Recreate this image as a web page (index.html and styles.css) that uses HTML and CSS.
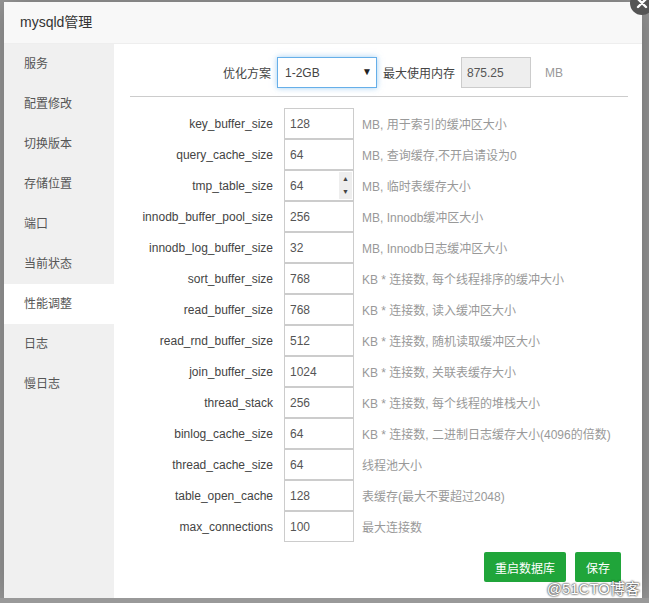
FILE: index.html
```html
<!DOCTYPE html>
<html lang="zh-CN">
<head>
    <meta charset="UTF-8">
    <meta name="viewport" content="width=device-width, initial-scale=1.0">
    <title>mysqld管理</title>
    <link rel="stylesheet" href="styles.css">
</head>
<body>
    <div class="dialog">
        <div class="dialog-title">mysqld管理</div>
        <span class="close-btn">
            <svg width="24" height="24" viewBox="0 0 24 24"><path d="M8 8 L16 16 M16 8 L8 16" stroke="#fff" stroke-width="2.4" stroke-linecap="round"/></svg>
        </span>

        <div class="dialog-body">
            <ul class="side-menu">
                <li>服务</li>
                <li>配置修改</li>
                <li>切换版本</li>
                <li>存储位置</li>
                <li>端口</li>
                <li>当前状态</li>
                <li class="active">性能调整</li>
                <li>日志</li>
                <li>慢日志</li>
            </ul>

            <div class="content">
                <div class="plan-row">
                    <span class="plan-label">优化方案</span>
                    <div class="select-box">
                        <select>
                            <option>1-2GB</option>
                            <option>2-4GB</option>
                            <option>4-8GB</option>
                        </select>
                        <span class="select-arrow">&#9660;</span>
                    </div>
                    <span class="mem-label">最大使用内存</span>
                    <input class="mem-input" type="text" value="875.25" readonly>
                    <span class="mem-unit">MB</span>
                </div>

                <div class="divider"></div>

                <div class="param-list" id="param-list"></div>

                <div class="actions">
                    <button class="btn">重启数据库</button>
                    <button class="btn">保存</button>
                </div>
            </div>
        </div>
        <span class="watermark">@51CTO博客</span>
    </div>

    <script>
        // 参数列表
        const params = [
            { name: "key_buffer_size", value: 128, note: "MB, 用于索引的缓冲区大小" },
            { name: "query_cache_size", value: 64, note: "MB, 查询缓存,不开启请设为0" },
            { name: "tmp_table_size", value: 64, note: "MB, 临时表缓存大小", spin: true },
            { name: "innodb_buffer_pool_size", value: 256, note: "MB, Innodb缓冲区大小" },
            { name: "innodb_log_buffer_size", value: 32, note: "MB, Innodb日志缓冲区大小" },
            { name: "sort_buffer_size", value: 768, note: "KB * 连接数, 每个线程排序的缓冲大小" },
            { name: "read_buffer_size", value: 768, note: "KB * 连接数, 读入缓冲区大小" },
            { name: "read_rnd_buffer_size", value: 512, note: "KB * 连接数, 随机读取缓冲区大小" },
            { name: "join_buffer_size", value: 1024, note: "KB * 连接数, 关联表缓存大小" },
            { name: "thread_stack", value: 256, note: "KB * 连接数, 每个线程的堆栈大小" },
            { name: "binlog_cache_size", value: 64, note: "KB * 连接数, 二进制日志缓存大小(4096的倍数)" },
            { name: "thread_cache_size", value: 64, note: "线程池大小" },
            { name: "table_open_cache", value: 128, note: "表缓存(最大不要超过2048)" },
            { name: "max_connections", value: 100, note: "最大连接数" }
        ];

        const list = document.getElementById("param-list");
        params.forEach(p => {
            const row = document.createElement("div");
            row.className = "param-row";
            row.innerHTML = `
                <span class="param-name">${p.name}</span>
                <span class="param-field">
                    <input type="text" value="${p.value}">
                    ${p.spin ? '<span class="spin"><i>&#9650;</i><i>&#9660;</i></span>' : ''}
                </span>
                <span class="param-note">${p.note}</span>
            `;
            list.appendChild(row);
        });
    </script>
</body>
</html>
```

FILE: styles.css
```css
body {
    margin: 0;
    background-color: #999;
    font-family: "Liberation Sans", "Noto Sans CJK SC", sans-serif;
    font-size: 12px;
    color: #555;
    overflow: hidden;
}
.dialog {
    position: relative;
    margin: 2px 0 0 4px;
    width: 638px;
    height: 596px;
    background-color: #fff;
    box-shadow: 1px 1px 30px rgba(0, 0, 0, 0.3);
}
.dialog-title {
    height: 41px;
    line-height: 41px;
    padding-left: 16px;
    background-color: #f8f8f8;
    border-bottom: 1px solid #eee;
    font-size: 14px;
    color: #333;
}
.close-btn {
    position: absolute;
    top: -11px;
    right: -12px;
    width: 24px;
    height: 24px;
    border-radius: 50%;
    background-color: #555;
}
.close-btn svg {
    display: block;
}
.dialog-body {
    display: flex;
    height: 554px;
}
.side-menu {
    list-style: none;
    margin: 0;
    padding: 0;
    width: 110px;
    background-color: #f0f0f0;
}
.side-menu li {
    height: 40px;
    line-height: 40px;
    padding-left: 20px;
    color: #555;
}
.side-menu li.active {
    background-color: #fff;
}
.content {
    flex: 1;
    padding: 13px 14px 0 16px;
}
.plan-row {
    display: flex;
    align-items: center;
    height: 31px;
}
.plan-label {
    width: 141px;
    text-align: right;
    color: #444;
}
.select-box {
    position: relative;
    margin-left: 6px;
}
.select-box select {
    appearance: none;
    width: 100px;
    height: 31px;
    padding: 0 0 0 7px;
    border: 1px solid #66afe9;
    border-radius: 0;
    box-shadow: 0 0 6px rgba(102, 175, 233, 0.6);
    background-color: #fff;
    font-family: inherit;
    font-size: 12px;
    color: #444;
    outline: none;
}
.select-arrow {
    position: absolute;
    right: 5px;
    top: 9px;
    font-size: 10px;
    color: #222;
}
.mem-label {
    margin-left: 6px;
    color: #444;
}
.mem-input {
    margin-left: 6px;
    width: 70px;
    height: 31px;
    box-sizing: border-box;
    padding: 0 5px;
    border: 1px solid #ccc;
    background-color: #eee;
    font-family: inherit;
    font-size: 12px;
    color: #555;
}
.mem-unit {
    margin-left: 14px;
    color: #999;
}
.divider {
    margin: 8px 0 11px;
    border-top: 1px solid #ccc;
}
.param-row {
    display: flex;
    align-items: center;
    height: 31px;
}
.param-name {
    width: 143px;
    text-align: right;
    color: #444;
}
.param-field {
    position: relative;
    margin-left: 11px;
}
.param-field input {
    display: block;
    width: 70px;
    height: 31px;
    box-sizing: border-box;
    padding: 0 5px;
    border: 1px solid #ccc;
    font-family: inherit;
    font-size: 12px;
    color: #555;
    outline: none;
}
.spin {
    position: absolute;
    top: 2px;
    right: 2px;
    width: 13px;
    height: 27px;
    background-color: #eee;
    display: flex;
    flex-direction: column;
    justify-content: space-around;
    align-items: center;
}
.spin i {
    font-style: normal;
    font-size: 7px;
    line-height: 8px;
    color: #444;
}
.param-note {
    margin-left: 8px;
    color: #999;
}
.actions {
    display: flex;
    justify-content: flex-end;
    gap: 9px;
    margin-top: 10px;
    padding-right: 7px;
}
.btn {
    height: 30px;
    padding: 0 11px;
    border: none;
    border-radius: 2px;
    background-color: #20a53a;
    color: #fff;
    font-family: inherit;
    font-size: 12px;
    cursor: pointer;
}
.watermark {
    position: absolute;
    right: 2px;
    bottom: 0;
    font-size: 15px;
    color: #fff;
    text-shadow: 0 0 2px #333, 0 0 2px #333;
}
```
